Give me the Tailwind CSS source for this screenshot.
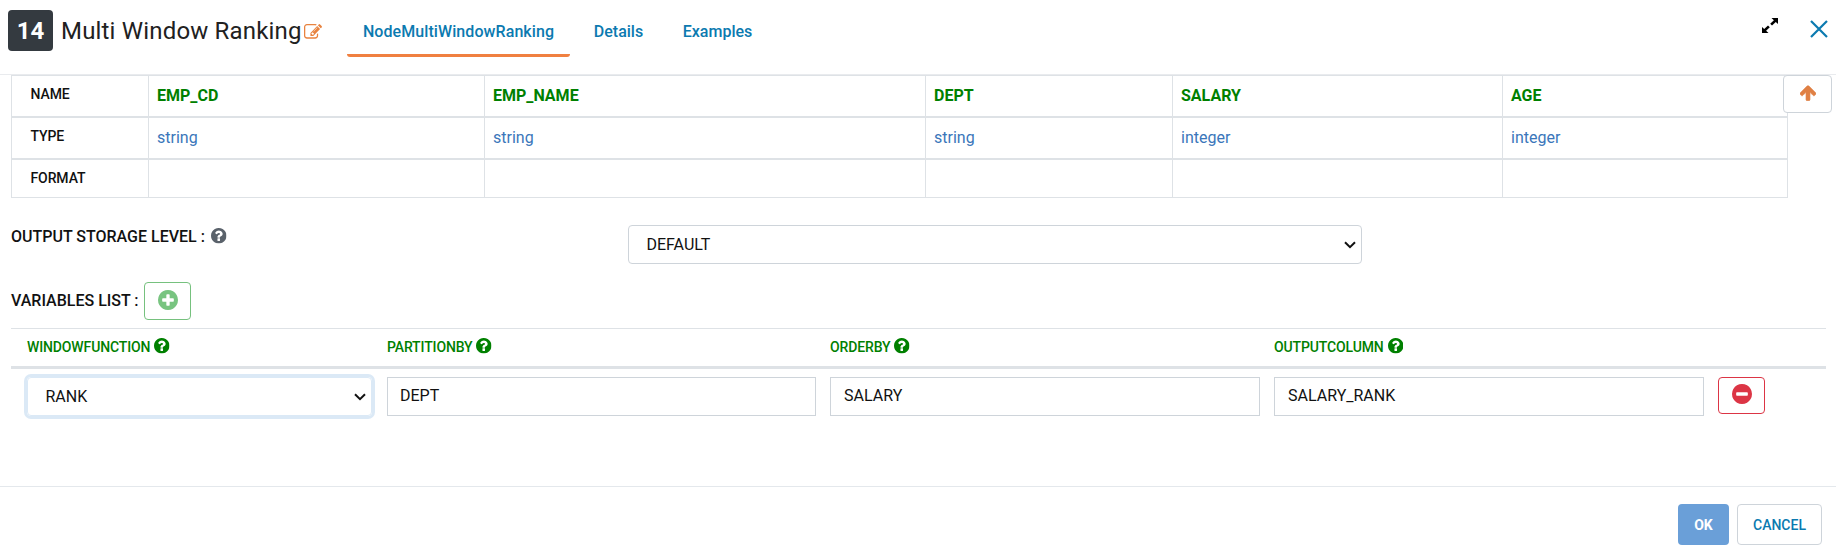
<!DOCTYPE html>
<html lang="en">
<head>
<meta charset="utf-8">
<title>Multi Window Ranking</title>
<script src="https://cdn.jsdelivr.net/npm/@tailwindcss/browser@4"></script>
</head>
<body class="w-[1836px] h-[550px] overflow-hidden bg-white font-['Roboto',sans-serif] text-base text-[#111]">
<svg class="hidden">
  <symbol id="help" viewBox="128 128 1536 1536"><path fill="currentColor" d="M1024 1376v-192q0-14-9-23t-23-9h-192q-14 0-23 9t-9 23v192q0 14 9 23t23 9h192q14 0 23-9t9-23zm256-672q0-88-55.5-163t-138.5-116-170-41q-243 0-371 213-15 24 8 42l132 100q7 6 19 6 16 0 25-12 53-68 86-92 34-24 86-24 48 0 85.5 26t37.5 59q0 38-20 61t-68 45q-63 28-115.5 86.500t-52.500 125.500v36q0 14 9 23t23 9h192q14 0 23-9t9-23q0-19 21.500-49.500t54.500-49.500q32-18 49-28.500t46-35 44.500-48 28-60.500 12.500-81zm384 192q0 209-103 385.500t-279.500 279.500-385.500 103-385.500-103-279.500-279.500-103-385.500 103-385.500 279.500-279.500 385.500-103 385.500 103 279.500 279.500 103 385.500z"/></symbol>
  <symbol id="chevron" viewBox="0 0 12 8"><path d="M1 1.200l5 5 5-5" fill="none" stroke="#111" stroke-width="2"/></symbol>
</svg>
<div class="flex h-[550px] flex-col">
  <header class="flex h-[75px] shrink-0 items-start border-b border-[#e9ebee] pl-2">
    <div class="mt-[10px] flex h-[41px] w-[45px] items-center justify-center rounded-[4px] bg-[#343a40] text-2xl font-bold text-white">14</div>
    <h1 class="mt-[13px] ml-2 w-[243px] whitespace-nowrap text-2xl leading-9 tracking-[0.18px] text-[#212121]">Multi Window Ranking</h1>
    <svg class="mt-[24px] h-[16px] w-[18px] text-[#e8833f]" viewBox="0 128 1792 1536" preserveAspectRatio="none"><path fill="currentColor" d="M888 1184l116-116-152-152-116 116v56h96v96h56zm440-720q-16-16-33 1l-350 350q-17 17-1 33t33-1l350-350q17-17 1-33zm80 594v190q0 119-84.500 203.500t-203.500 84.500h-832q-119 0-203.500-84.500t-84.500-203.500v-832q0-119 84.500-203.500t203.500-84.500h832q63 0 117 25 15 7 18 23 3 17-9 29l-49 49q-14 14-32 8-23-6-45-6h-832q-66 0-113 47t-47 113v832q0 66 47 113t113 47h832q66 0 113-47t47-113v-126q0-13 9-22l64-64q15-15 35-7t20 29zm-96-738l288 288-672 672h-288v-288zm444 132l-92 92-288-288 92-92q28-28 68-28t68 28l152 152q28 28 28 68t-28 68z"/></svg>
    <nav class="ml-[25px] flex h-[57px] font-medium leading-6 text-[#0b7ab0]">
      <a class="w-[223px] rounded-[3px] border-b-[3px] border-[#f08040] pt-5 text-center tracking-[0.08px]">NodeMultiWindowRanking</a>
      <a class="w-[97px] pt-5 text-center">Details</a>
      <a class="w-[101px] pt-5 text-center">Examples</a>
    </nav>
    <svg class="mt-[18px] ml-auto h-[15px] w-[16px]" viewBox="0 0 16 15"><path d="M9.500 0H16v6l-2.200-2-3.800 3.500-1.800-1.700 3.700-3.500zM6.500 15H0V9l2.200 2L6 7.500l1.800 1.700-3.700 3.500z"/></svg>
    <svg class="mt-[20px] mr-[8px] ml-[32px] h-[18px] w-[18px]" viewBox="0 0 18 18"><path d="M1 1l16 16M17 1L1 17" fill="none" stroke="#0b7ab0" stroke-width="2.200"/></svg>
  </header>

  <main class="relative h-[411px] shrink-0">
    <div class="ml-[11px] grid w-[1777px] grid-cols-[137px_336px_441px_247px_330px_286px] border-t border-[#dee2e6] [&>div]:border-l [&>div]:border-[#dee2e6] [&>div:nth-child(6n)]:border-r">
      <div class="h-[42px] border-b-2 pt-[6px] pl-[18.500px] text-sm leading-6 font-medium tracking-[-0.1px]">NAME</div>
      <div class="h-[42px] border-b-2 pt-2 pl-2 leading-6 font-bold text-[#008000]">EMP_CD</div>
      <div class="h-[42px] border-b-2 pt-2 pl-2 leading-6 font-bold text-[#008000]">EMP_NAME</div>
      <div class="h-[42px] border-b-2 pt-2 pl-2 leading-6 font-bold text-[#008000]">DEPT</div>
      <div class="h-[42px] border-b-2 pt-2 pl-2 leading-6 font-bold text-[#008000]">SALARY</div>
      <div class="h-[42px] border-b-2 pt-2 pl-2 leading-6 font-bold text-[#008000]">AGE</div>
      <div class="h-[42px] border-b-2 pt-[6px] pl-[18.500px] text-sm leading-6 font-medium tracking-[-0.1px]">TYPE</div>
      <div class="h-[42px] border-b-2 pt-2 pl-2 leading-6 text-[#3a76ba]">string</div>
      <div class="h-[42px] border-b-2 pt-2 pl-2 leading-6 text-[#3a76ba]">string</div>
      <div class="h-[42px] border-b-2 pt-2 pl-2 leading-6 text-[#3a76ba]">string</div>
      <div class="h-[42px] border-b-2 pt-2 pl-2 leading-6 text-[#3a76ba]">integer</div>
      <div class="h-[42px] border-b-2 pt-2 pl-2 leading-6 text-[#3a76ba]">integer</div>
      <div class="h-[38px] border-b pt-[6px] pl-[18.500px] text-sm leading-6 font-medium tracking-[-0.1px]">FORMAT</div>
      <div class="border-b"></div><div class="border-b"></div><div class="border-b"></div><div class="border-b"></div><div class="border-b"></div>
    </div>
    <button class="absolute top-0 left-[1783px] flex h-[38px] w-[49px] items-center justify-center rounded-[4px] border border-[#ced4da] bg-white pb-[3px] text-[#e08044]">
      <svg class="h-[16px] w-[16px]" viewBox="117 150 1558 1514"><path fill="currentColor" stroke="currentColor" stroke-width="60" d="M1675 971q0 51-37 90l-75 75q-38 38-91 38-54 0-90-38l-294-293v704q0 52-37.500 84.500t-90.500 32.500h-128q-53 0-90.500-32.500t-37.500-84.500v-704l-294 293q-36 38-90 38t-90-38l-75-75q-38-38-38-90 0-53 38-91l651-651q35-37 90-37 54 0 91 37l651 651q37 39 37 91z"/></svg>
    </button>

    <div class="mt-[27px] ml-[11px] flex h-[39px] items-start">
      <div class="flex w-[617px] items-start gap-1 leading-6"><span class="w-[196px] whitespace-nowrap font-medium">OUTPUT STORAGE LEVEL :</span><svg class="mt-[3px] h-[15.500px] w-[15.500px] text-[#5a626b]"><use href="#help"/></svg></div>
      <div class="flex h-[39px] w-[734px] items-center justify-between rounded-[4px] border border-[#ced4da] pr-[5px] pl-[17.500px]"><span>DEFAULT</span><svg class="h-[8px] w-[12px]"><use href="#chevron"/></svg></div>
    </div>

    <div class="mt-[18px] ml-[11px] flex h-[38px] items-center">
      <span class="w-[133px] whitespace-nowrap font-medium">VARIABLES LIST :</span>
      <button class="flex h-[38px] w-[47px] items-center justify-center rounded-[4px] border border-[#76c17e] pb-[2px] text-[#78c480]">
        <svg class="h-[20px] w-[20px]" viewBox="128 128 1536 1536"><path fill="currentColor" d="M1344 960v-128q0-26-19-45t-45-19h-256v-256q0-26-19-45t-45-19h-128q-26 0-45 19t-19 45v256h-256q-26 0-45 19t-19 45v128q0 26 19 45t45 19h256v256q0 26 19 45t45 19h128q26 0 45-19t19-45v-256h256q26 0 45-19t19-45zm320-64q0 209-103 385.500t-279.500 279.500-385.500 103-385.500-103-279.500-279.500-103-385.500 103-385.500 279.500-279.500 385.500-103 385.500 103 279.500 279.500 103 385.500z"/></svg>
      </button>
    </div>

    <div class="mx-[11px] mt-[8px] w-[1815px]">
      <div class="grid h-[41px] grid-cols-[360px_443px_444px_1fr] border-t border-b-[3px] border-[#dee2e6] pt-[6px] pl-[16px] text-sm leading-6 font-medium tracking-[-0.13px] text-[#008000]">
        <div class="flex gap-1"><span>WINDOWFUNCTION</span><svg class="mt-[3px] h-[15.500px] w-[15.500px]"><use href="#help"/></svg></div>
        <div class="flex gap-1"><span>PARTITIONBY</span><svg class="mt-[3px] h-[15.500px] w-[15.500px]"><use href="#help"/></svg></div>
        <div class="flex gap-1"><span>ORDERBY</span><svg class="mt-[3px] h-[15.500px] w-[15.500px]"><use href="#help"/></svg></div>
        <div class="flex gap-1"><span>OUTPUTCOLUMN</span><svg class="mt-[3px] h-[15.500px] w-[15.500px]"><use href="#help"/></svg></div>
      </div>
      <div class="mt-2 flex items-start pl-[16px]">
        <div class="flex h-[39px] w-[345px] items-center justify-between rounded-[4px] border border-[#dbe9f6] pr-[5px] pl-[17.500px] ring-3 ring-[#dbe9f6]"><span>RANK</span><svg class="h-[8px] w-[12px]"><use href="#chevron"/></svg></div>
        <input class="ml-[15px] h-[39px] w-[429px] border border-[#ced4da] px-3 pb-[2px]" value="DEPT">
        <input class="ml-[14px] h-[39px] w-[430px] border border-[#ced4da] px-[13px] pb-[2px]" value="SALARY">
        <input class="ml-[14px] h-[39px] w-[430px] border border-[#ced4da] px-[13px] pb-[2px]" value="SALARY_RANK">
        <button class="ml-[14px] flex h-[37px] w-[47px] items-center justify-center rounded-[4px] border border-[#dc3545] pb-[3px] text-[#dc3545]">
          <svg class="h-[20px] w-[20px]" viewBox="128 128 1536 1536"><path fill="currentColor" d="M1344 960v-128q0-26-19-45t-45-19h-768q-26 0-45 19t-19 45v128q0 26 19 45t45 19h768q26 0 45-19t19-45zm320-64q0 209-103 385.500t-279.500 279.500-385.500 103-385.500-103-279.500-279.500-103-385.500 103-385.500 279.500-279.500 385.500-103 385.500 103 279.500 279.500 103 385.500z"/></svg>
        </button>
      </div>
    </div>
  </main>

  <footer class="flex h-[64px] items-start justify-end gap-2 border-t border-[#e4e8ec] pt-[17px] pr-[14px] text-sm font-medium">
    <button class="h-[41px] w-[51px] rounded-[4px] bg-[#6a9fd8] font-bold text-white">OK</button>
    <button class="h-[41px] w-[85px] rounded-[4px] border border-[#ced4da] text-[#0b7ab0]">CANCEL</button>
  </footer>
</div>
</body>
</html>
